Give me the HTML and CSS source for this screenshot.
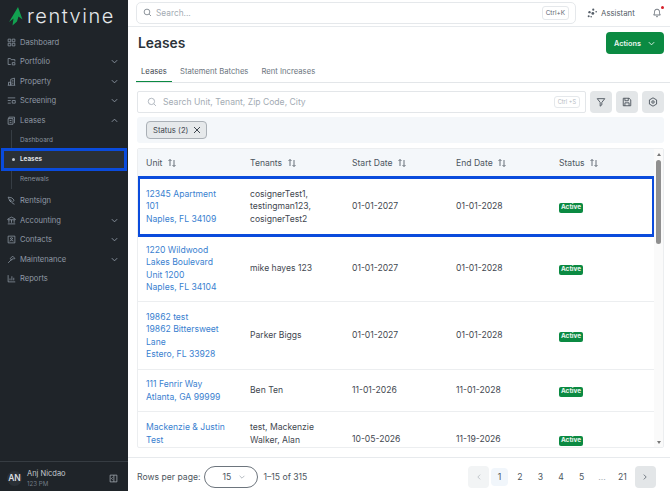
FILE: index.html
```html
<!DOCTYPE html>
<html>
<head>
    <link rel="stylesheet" href="styles.css">
</head>
<body>
    <div class="app">
        <aside class="sidebar">
            <div class="logo">
                <svg width="14" height="19" viewBox="0 0 14 19"><path d="M9 0 L13.500 12.500 L9.500 9.500 L8 14.500 L3.500 18.500 L4.500 11.500 L0 15 Z" fill="#12a150"/></svg>
                <span class="logo-text">rentvine</span>
            </div>
            <nav class="nav">
                <a class="nav-item">
                    <svg class="nav-icon" viewBox="0 0 12 12"><path d="M1.500 1.500h3.500v3.500h-3.500zM7 1.500h3.500v3.500h-3.500zM1.500 7h3.500v3.500h-3.500zM7 7h3.500v3.500h-3.500z"/></svg>
                    <span>Dashboard</span>
                </a>
                <a class="nav-item">
                    <svg class="nav-icon" viewBox="0 0 12 12"><path d="M5 10H1.500V2h3l1 1.500h5V6M7 7.500h3.500v3H7z"/></svg>
                    <span>Portfolio</span>
                    <svg class="chev" viewBox="0 0 10 10"><path d="M2 3.500l3 3 3-3"/></svg>
                </a>
                <a class="nav-item">
                    <svg class="nav-icon" viewBox="0 0 12 12"><path d="M1 11h10M2 11V7h3v4M5 11V3l5-1.500V11M7 4.500h1.500M7 6.500h1.500M7 8.500h1.500"/></svg>
                    <span>Property</span>
                    <svg class="chev" viewBox="0 0 10 10"><path d="M2 3.500l3 3 3-3"/></svg>
                </a>
                <a class="nav-item">
                    <svg class="nav-icon" viewBox="0 0 12 12"><path d="M1 2.500h10M1 6h4M1 9.500h4M7 6h4v3.500H7z"/></svg>
                    <span>Screening</span>
                    <svg class="chev" viewBox="0 0 10 10"><path d="M2 3.500l3 3 3-3"/></svg>
                </a>
                <a class="nav-item">
                    <svg class="nav-icon" viewBox="0 0 12 12"><path d="M2.500 3.500V1.500h7.500v8M1.500 3.500h6.500v7.500H1.500zM3.500 6h2.500M3.500 8.500h2.500"/></svg>
                    <span>Leases</span>
                    <svg class="chev" viewBox="0 0 10 10"><path d="M2 6.500l3-3 3 3"/></svg>
                </a>
                <div class="sub-nav">
                    <a class="sub-item">Dashboard</a>
                    <a class="sub-item active">Leases</a>
                    <a class="sub-item">Renewals</a>
                </div>
                <a class="nav-item rentsign">
                    <svg class="nav-icon" viewBox="0 0 12 12"><path d="M1.500 1.500l5 1 3 3-2.500 3-3-1.500zM4.500 5a1 1 0 1 0 .1 0M7 9.500l3 1.500"/></svg>
                    <span>Rentsign</span>
                </a>
                <a class="nav-item">
                    <svg class="nav-icon" viewBox="0 0 12 12"><path d="M1 4l5-2.500L11 4v1H1zM2.500 5v4M6 5v4M9.500 5v4M1 10.500h10"/></svg>
                    <span>Accounting</span>
                    <svg class="chev" viewBox="0 0 10 10"><path d="M2 3.500l3 3 3-3"/></svg>
                </a>
                <a class="nav-item">
                    <svg class="nav-icon" viewBox="0 0 12 12"><path d="M1.500 1.500h9v9h-9zM6 3.500a1.200 1.200 0 1 0 .1 0M3.800 8.500c0-2.500 4.400-2.500 4.400 0"/></svg>
                    <span>Contacts</span>
                    <svg class="chev" viewBox="0 0 10 10"><path d="M2 3.500l3 3 3-3"/></svg>
                </a>
                <a class="nav-item">
                    <svg class="nav-icon" viewBox="0 0 12 12"><path d="M1.500 10.500L6 6M4.500 4.500l3-3 3 3-1.500 1-1-1-2 2.500z"/></svg>
                    <span>Maintenance</span>
                    <svg class="chev" viewBox="0 0 10 10"><path d="M2 3.500l3 3 3-3"/></svg>
                </a>
                <a class="nav-item">
                    <svg class="nav-icon" viewBox="0 0 12 12"><path d="M1.500 1.500v9h9.500M4 8.500V6M6.500 8.500V3M9 8.500V5"/></svg>
                    <span>Reports</span>
                </a>
            </nav>
            <div class="user">
                <div class="avatar">AN</div>
                <div class="user-info">
                    <div class="user-name">Anj Nicdao</div>
                    <div class="user-org">123 PM</div>
                </div>
                <svg class="collapse" viewBox="0 0 12 12"><path d="M1.500 1.500h9v9h-9zM6.500 1.500v9M4.800 4.500l-1.500 1.500 1.500 1.500"/></svg>
            </div>
        </aside>

        <main class="main">
            <header class="topbar">
                <div class="global-search">
                    <svg class="search-icon" viewBox="0 0 12 12"><circle cx="5.300" cy="5.300" r="3.800"/><path d="M8.200 8.200l2.500 2.500"/></svg>
                    <span class="global-placeholder">Search...</span>
                    <span class="kbd">Ctrl+K</span>
                </div>
                <div class="assistant">
                    <svg width="10" height="10" viewBox="0 0 12 12"><circle cx="7.500" cy="2" r="1.300"/><circle cx="3" cy="5" r="1.400"/><circle cx="7" cy="6.500" r="1.700"/><circle cx="11" cy="4.500" r="1"/><circle cx="2" cy="10" r="1.200"/><circle cx="5" cy="10.500" r="1"/></svg>
                    <span>Assistant</span>
                </div>
                <div class="bell">
                    <svg width="10" height="11" viewBox="0 0 12 13"><path d="M2 9.500c1-1 1-2.500 1-4a3 3 0 0 1 6 0c0 1.500 0 3 1 4zM5 11.500h2"/></svg>
                    <span class="bell-dot"></span>
                </div>
            </header>

            <div class="page-head">
                <h1>Leases</h1>
                <button class="actions">Actions
                    <svg width="9" height="9" viewBox="0 0 10 10"><path d="M2 3.500l3 3 3-3"/></svg>
                </button>
            </div>

            <div class="tabs">
                <span class="tab current">Leases</span>
                <span class="tab">Statement Batches</span>
                <span class="tab">Rent Increases</span>
            </div>

            <div class="tools">
                <div class="table-search">
                    <svg class="search-icon" viewBox="0 0 12 12"><circle cx="5.300" cy="5.300" r="3.800"/><path d="M8.200 8.200l2.500 2.500"/></svg>
                    <span class="table-placeholder">Search Unit, Tenant, Zip Code, City</span>
                    <span class="kbd faint">Ctrl +S</span>
                </div>
                <button class="tool-btn"><svg viewBox="0 0 12 12"><path d="M1.500 2h9L7 6.500v3l-2 1.500V6.500z"/></svg></button>
                <button class="tool-btn"><svg viewBox="0 0 12 12"><path d="M1.500 1.500h7l2 2v7h-9zM3.500 1.500v3h4v-3M3.500 10.500v-3.500h5v3.500"/></svg></button>
                <button class="tool-btn"><svg viewBox="0 0 12 12"><path d="M6 1l4.300 2.500v5L6 11 1.700 8.500v-5z"/><circle cx="6" cy="6" r="1.500"/></svg></button>
            </div>

            <div class="chips">
                <span class="chip">Status (2)
                    <svg width="8" height="8" viewBox="0 0 8 8"><path d="M1 1l6 6M7 1l-6 6"/></svg>
                </span>
            </div>

            <div class="table-wrap">
                <div class="table">
                    <div class="row head">
                        <div>Unit <svg class="sort" viewBox="0 0 10 10"><path d="M3 8V1.500M1.500 3L3 1.500 4.500 3M7 2v6.500M5.500 7L7 8.500 8.500 7"/></svg></div>
                        <div>Tenants <svg class="sort" viewBox="0 0 10 10"><path d="M3 8V1.500M1.500 3L3 1.500 4.500 3M7 2v6.500M5.500 7L7 8.500 8.500 7"/></svg></div>
                        <div>Start Date <svg class="sort" viewBox="0 0 10 10"><path d="M3 8V1.500M1.500 3L3 1.500 4.500 3M7 2v6.500M5.500 7L7 8.500 8.500 7"/></svg></div>
                        <div>End Date <svg class="sort" viewBox="0 0 10 10"><path d="M3 8V1.500M1.500 3L3 1.500 4.500 3M7 2v6.500M5.500 7L7 8.500 8.500 7"/></svg></div>
                        <div>Status <svg class="sort" viewBox="0 0 10 10"><path d="M3 8V1.500M1.500 3L3 1.500 4.500 3M7 2v6.500M5.500 7L7 8.500 8.500 7"/></svg></div>
                    </div>
                    <div class="row selected">
                        <div class="unit">12345 Apartment<br>101<br>Naples, FL 34109</div>
                        <div>cosignerTest1,<br>testingman123,<br>cosignerTest2</div>
                        <div>01-01-2027</div>
                        <div>01-01-2028</div>
                        <div><span class="badge">Active</span></div>
                    </div>
                    <div class="row r2">
                        <div class="unit">1220 Wildwood<br>Lakes Boulevard<br>Unit 1200<br>Naples, FL 34104</div>
                        <div>mike hayes 123</div>
                        <div>01-01-2027</div>
                        <div>01-01-2028</div>
                        <div><span class="badge">Active</span></div>
                    </div>
                    <div class="row r3">
                        <div class="unit">19862 test<br>19862 Bittersweet<br>Lane<br>Estero, FL 33928</div>
                        <div>Parker Biggs</div>
                        <div>01-01-2027</div>
                        <div>01-01-2028</div>
                        <div><span class="badge">Active</span></div>
                    </div>
                    <div class="row r4">
                        <div class="unit">111 Fenrir Way<br>Atlanta, GA 99999</div>
                        <div>Ben Ten</div>
                        <div>11-01-2026</div>
                        <div>11-01-2028</div>
                        <div><span class="badge">Active</span></div>
                    </div>
                    <div class="row r5">
                        <div class="unit">Mackenzie &amp; Justin<br>Test</div>
                        <div>test, Mackenzie<br>Walker, Alan</div>
                        <div>10-05-2026</div>
                        <div>11-19-2026</div>
                        <div><span class="badge">Active</span></div>
                    </div>
                </div>
                <div class="scrollbar">
                    <span class="arrow up"></span>
                    <span class="thumb"></span>
                    <span class="arrow down"></span>
                </div>
            </div>

            <footer class="pager">
                <span class="rows-label">Rows per page:</span>
                <span class="rows-select">15
                    <svg width="8" height="8" viewBox="0 0 10 10"><path d="M2 3.500l3 3 3-3"/></svg>
                </span>
                <span class="rows-count">1–15 of 315</span>
                <div class="pages">
                    <span class="page-arrow off"><svg width="8" height="8" viewBox="0 0 10 10"><path d="M6.500 2l-3 3 3 3"/></svg></span>
                    <span class="page-num on">1</span>
                    <span class="page-num">2</span>
                    <span class="page-num">3</span>
                    <span class="page-num">4</span>
                    <span class="page-num">5</span>
                    <span class="page-num dots">...</span>
                    <span class="page-num">21</span>
                    <span class="page-arrow next"><svg width="8" height="8" viewBox="0 0 10 10"><path d="M3.500 2l3 3-3 3"/></svg></span>
                </div>
            </footer>
        </main>
    </div>
</body>
</html>
```

FILE: styles.css
```css
* {
    box-sizing: border-box;
}

html, body {
    height: 100%;
    margin: 0;
    overflow: hidden;
}

body {
    font-family: Inter, "Liberation Sans", sans-serif;
    font-size: 8.6px;
    color: #3f4750;
    background-color: #fff;
}

svg {
    fill: none;
    stroke: currentColor;
    stroke-width: 1;
    flex: none;
}

.app {
    display: flex;
    height: 491px;
}

/* Sidebar */
.sidebar {
    width: 128px;
    flex: none;
    display: flex;
    flex-direction: column;
    background-color: #1f2429;
    color: #8f99a5;
}

.logo {
    display: flex;
    align-items: center;
    gap: 4px;
    height: 32.5px;
    padding: 0 0 0 9px;
}

.logo svg {
    stroke: none;
}

.logo-text {
    font-size: 20px;
    font-weight: 300;
    letter-spacing: 1.5px;
    color: #e4e7ea;
}

.nav {
    flex: 1;
}

.nav-item {
    display: flex;
    align-items: center;
    height: 19.5px;
    padding: 0 9px 0 7px;
    font-size: 7.6px;
}

.nav-item span {
    flex: 1;
    margin-left: 4px;
}

.nav-icon {
    width: 9px;
    height: 9px;
}

.chev {
    width: 9px;
    height: 9px;
}

.sub-nav {
    margin-left: 11px;
    border-left: 1px solid #363d44;
}

.sub-item {
    display: flex;
    align-items: center;
    height: 19.5px;
    padding-left: 8px;
    font-size: 6.4px;
    color: #87919c;
}

.sub-item.active {
    position: relative;
    margin-left: -9px;
    margin-right: 3px;
    padding-left: 17px;
    background-color: #2a3036;
    outline: 3px solid #0a4bdc;
    outline-offset: -1px;
    color: #e8ebee;
    font-weight: 600;
}

.sub-item.active::before {
    content: "";
    position: absolute;
    left: 9px;
    top: 8px;
    width: 3px;
    height: 3px;
    border-radius: 50%;
    background-color: #c5cbd1;
}

.rentsign {
    margin-top: 2.5px;
}

.user {
    display: flex;
    align-items: center;
    height: 30px;
    padding: 3px 10px 0 7px;
    border-top: 1px solid #363c42;
}

.avatar {
    width: 15px;
    height: 15px;
    border-radius: 50%;
    background-color: #2a3036;
    color: #d7dbdf;
    font-size: 8.5px;
    font-weight: 600;
    line-height: 15px;
    text-align: center;
}

.user-info {
    flex: 1;
    margin-left: 5px;
}

.user-name {
    font-size: 7.5px;
    color: #c3c8ce;
    line-height: 10px;
}

.user-org {
    font-size: 6.2px;
    color: #727b85;
    line-height: 9px;
}

.collapse {
    width: 9px;
    height: 9px;
    color: #a7aeb6;
}

/* Main column */
.main {
    flex: 1;
    min-width: 0;
    display: flex;
    flex-direction: column;
}

.topbar {
    display: flex;
    align-items: center;
    height: 27px;
    padding: 0 9px 1px 8px;
    border-bottom: 1px solid #e7eaed;
    flex: none;
}

.global-search {
    display: flex;
    align-items: center;
    flex: none;
    width: 440px;
    height: 22px;
    padding: 0 6px 0 6px;
    border: 1px solid #e5e8eb;
    border-radius: 5px;
}

.search-icon {
    width: 9px;
    height: 9px;
    color: #68717b;
}

.global-placeholder {
    flex: 1;
    margin-left: 4px;
    color: #a3abb4;
    font-size: 8.3px;
}

.kbd {
    padding: 2px 3px;
    border: 1px solid #e5e8eb;
    border-radius: 3px;
    font-size: 6.4px;
    color: #5e6771;
}

.kbd.faint {
    color: #b5bbc2;
    font-size: 5.6px;
}

.assistant {
    display: flex;
    align-items: center;
    gap: 4px;
    margin-left: 11px;
    font-size: 7.8px;
    color: #555e68;
}

.assistant svg {
    fill: #555e68;
    stroke: none;
}

.bell {
    position: relative;
    display: flex;
    margin-left: 17px;
    color: #555e68;
}

.bell-dot {
    position: absolute;
    right: -2px;
    top: -1px;
    width: 3px;
    height: 3px;
    border-radius: 50%;
    background-color: #d6202a;
}

.page-head {
    display: flex;
    align-items: center;
    justify-content: space-between;
    height: 22px;
    margin: 5px 6px 0 10px;
    flex: none;
}

h1 {
    margin: 0;
    font-size: 13.8px;
    font-weight: 600;
    color: #2c333a;
}

.actions {
    display: flex;
    align-items: center;
    justify-content: center;
    gap: 6px;
    width: 58px;
    height: 22px;
    border: none;
    border-radius: 4px;
    background-color: #0b8a42;
    color: #e8f5ee;
    font-family: inherit;
    font-size: 7.3px;
    font-weight: 600;
}

.tabs {
    display: flex;
    height: 29px;
    margin-left: 8px;
    border-bottom: 1px solid #e3e6e9;
    flex: none;
    font-size: 7.7px;
    color: #6b747e;
}

.tab {
    display: flex;
    align-items: center;
    height: 28px;
    padding: 7px 5px 0;
    margin-right: 3px;
}

.tab.current {
    width: 36px;
    color: #3f4750;
    border-bottom: 1px solid #0b8a42;
}

.tools {
    display: flex;
    align-items: center;
    gap: 4px;
    height: 22px;
    margin: 8px 6px 0 9px;
    flex: none;
}

.table-search {
    flex: 1;
    display: flex;
    align-items: center;
    height: 22px;
    padding: 0 5px 0 9px;
    border: 1px solid #e3e6e9;
    border-radius: 2px;
}

.table-search .search-icon {
    width: 10px;
    height: 10px;
    color: #a3abb4;
}

.table-placeholder {
    flex: 1;
    margin-left: 6px;
    font-size: 8.6px;
    color: #a3abb4;
}

.tool-btn {
    display: flex;
    align-items: center;
    justify-content: center;
    width: 22px;
    height: 22px;
    padding: 0;
    border: none;
    border-radius: 4px;
    background-color: #e3e6e8;
    color: #3f4750;
}

.tool-btn svg {
    width: 10px;
    height: 10px;
}

.chips {
    display: flex;
    align-items: center;
    height: 26px;
    margin: 4px 6px 0 9px;
    padding-left: 9px;
    border-radius: 3px;
    background-color: #f4f7fa;
    flex: none;
}

.chip {
    display: flex;
    align-items: center;
    gap: 5px;
    height: 18px;
    padding: 0 5px 0 6px;
    border: 1px solid #aab0b6;
    border-radius: 4px;
    background-color: #e6e9eb;
    font-size: 7.7px;
    color: #3f4750;
}

/* Table */
.table-wrap {
    display: flex;
    height: 300px;
    margin: 5px 6px 0 9px;
    border: 1px solid #eceef0;
    border-radius: 2px;
    overflow: hidden;
    flex: none;
}

.table {
    flex: 1;
    min-width: 0;
    overflow: hidden;
}

.row {
    display: grid;
    grid-template-columns: 104px 102px 104px 103px 1fr;
    align-items: center;
    padding-left: 8px;
    border-bottom: 1px solid #eceef0;
    line-height: 12.5px;
    color: #3f4750;
    font-size: 8.6px;
}

.row.head {
    height: 28px;
    background-color: #f4f7fa;
    border-bottom: none;
    color: #4d5660;
}

.row.selected {
    height: 59px;
    padding-top: 1px;
    outline: 3px solid #0a4bdc;
    outline-offset: -2px;
}

.r2 {
    height: 66px;
}

.r3 {
    height: 68px;
}

.r4 {
    height: 42px;
}

.r5 {
    height: 50px;
    align-items: start;
    padding-top: 9px;
}

.r5 > div:nth-child(n+3) {
    padding-top: 12px;
}

.unit {
    color: #3a7fd0;
}

.sort {
    width: 10px;
    height: 10px;
    margin-left: 2px;
    vertical-align: -2px;
    color: #68717b;
}

.badge {
    display: inline-block;
    padding: 0 2px;
    border-radius: 2px;
    background-color: #0b8a42;
    color: #eaf6ef;
    font-size: 6.4px;
    font-weight: 700;
    line-height: 9.5px;
}

.scrollbar {
    width: 9px;
    flex: none;
    display: flex;
    flex-direction: column;
    align-items: center;
    padding: 4px 0 3px;
    background-color: #fafafa;
}

.thumb {
    width: 5px;
    height: 84px;
    margin-top: 4px;
    border-radius: 3px;
    background-color: #8f8f8f;
}

.arrow {
    width: 0;
    height: 0;
    border-left: 2.5px solid transparent;
    border-right: 2.5px solid transparent;
}

.arrow.up {
    border-bottom: 3px solid #777;
}

.arrow.down {
    margin-top: auto;
    border-top: 3px solid #777;
}

/* Pager */
.pager {
    display: flex;
    align-items: center;
    height: 34px;
    margin-top: 9px;
    padding: 4px 14.5px 0 9px;
    border-top: 1px solid #e7eaed;
    flex: none;
    font-size: 8.65px;
    color: #4d5660;
}

.rows-select {
    display: flex;
    align-items: center;
    justify-content: space-between;
    width: 54px;
    height: 22px;
    margin: 0 5px 0 4px;
    padding: 0 11px 0 17px;
    border: 1px solid #6d757d;
    border-radius: 11px;
}

.rows-select svg {
    color: #a3abb4;
}

.pages {
    margin-left: auto;
    display: flex;
    align-items: center;
}

.page-arrow {
    display: flex;
    align-items: center;
    justify-content: center;
    width: 21px;
    height: 22px;
    border-radius: 4px;
}

.page-arrow.off {
    background-color: #f2f4f5;
    color: #b5bbc2;
}

.page-arrow.next {
    background-color: #e3e6e8;
    color: #555e68;
}

.page-num {
    display: flex;
    align-items: center;
    justify-content: center;
    width: 17px;
    height: 18px;
    margin-right: 3.5px;
    border-radius: 4px;
}

.page-num.on {
    margin-left: 2px;
    background-color: #f1f6fb;
}

.page-num.dots {
    color: #a3abb4;
}
```
